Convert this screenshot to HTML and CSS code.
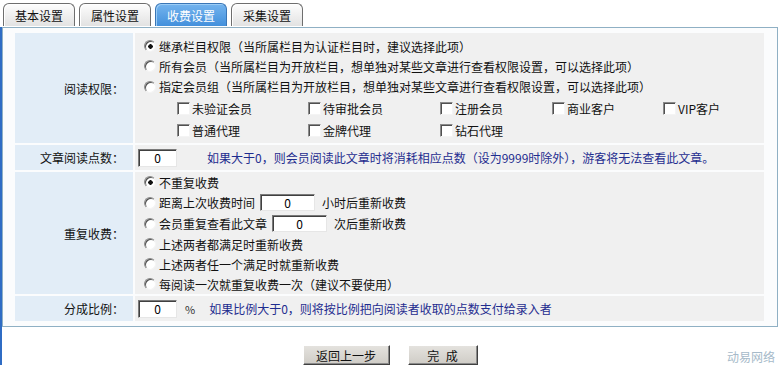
FILE: index.html
```html
<!DOCTYPE html>
<html lang="zh-CN">
<head>
  <meta charset="UTF-8" />
  <title>收费设置</title>
  <link rel="stylesheet" href="styles.css">
</head>
<body>
  <div class="tabs">
    <div class="tab">基本设置</div>
    <div class="tab">属性设置</div>
    <div class="tab active">收费设置</div>
    <div class="tab">采集设置</div>
  </div>

  <div class="main">
    <div class="panel">
      <div class="form">
        <div class="label">阅读权限：</div>
        <div class="field field-perm">
          <label class="line"><input type="radio" name="perm" checked>继承栏目权限（当所属栏目为认证栏目时，建议选择此项）</label>
          <label class="line"><input type="radio" name="perm">所有会员（当所属栏目为开放栏目，想单独对某些文章进行查看权限设置，可以选择此项）</label>
          <label class="line line-tall"><input type="radio" name="perm">指定会员组（当所属栏目为开放栏目，想单独对某些文章进行查看权限设置，可以选择此项）</label>
          <div class="groups">
            <label><input type="checkbox">未验证会员</label>
            <label><input type="checkbox">待审批会员</label>
            <label><input type="checkbox">注册会员</label>
            <label><input type="checkbox">商业客户</label>
            <label><input type="checkbox">VIP客户</label>
            <label><input type="checkbox">普通代理</label>
            <label><input type="checkbox">金牌代理</label>
            <label><input type="checkbox">钻石代理</label>
          </div>
        </div>

        <div class="label">文章阅读点数：</div>
        <div class="field field-inline">
          <input type="text" class="num" value="0">
          <span class="hint">如果大于0，则会员阅读此文章时将消耗相应点数（设为9999时除外），游客将无法查看此文章。</span>
        </div>

        <div class="label">重复收费：</div>
        <div class="field field-repeat">
          <label class="line"><input type="radio" name="repeat" checked>不重复收费</label>
          <label class="line line-tall"><input type="radio" name="repeat">距离上次收费时间<input type="text" class="num num-wide" value="0">小时后重新收费</label>
          <label class="line line-tall"><input type="radio" name="repeat">会员重复查看此文章<input type="text" class="num num-wide" value="0">次后重新收费</label>
          <label class="line"><input type="radio" name="repeat">上述两者都满足时重新收费</label>
          <label class="line"><input type="radio" name="repeat">上述两者任一个满足时就重新收费</label>
          <label class="line"><input type="radio" name="repeat">每阅读一次就重复收费一次（建议不要使用）</label>
        </div>

        <div class="label">分成比例：</div>
        <div class="field field-inline">
          <input type="text" class="num" value="0">
          <span class="unit">%</span>
          <span class="hint">如果比例大于0，则将按比例把向阅读者收取的点数支付给录入者</span>
        </div>
      </div>
    </div>

    <div class="actions">
      <button class="btn btn-back">返回上一步</button>
      <button class="btn btn-done">完 成</button>
    </div>
  </div>

  <div class="watermark">动易网络</div>
</body>
</html>
```

FILE: styles.css
```css
body {
  margin: 0;
  font-family: "Noto Sans CJK SC", "Noto Sans", sans-serif;
  font-size: 12px;
  color: #111;
  background: #fff;
  position: relative;
  height: 365px;
  overflow: hidden;
}

/* tabs */
.tabs {
  display: flex;
  gap: 4px;
  padding: 3px 0 0 3px;
}
.tab {
  width: 72px;
  height: 23px;
  line-height: 23px;
  box-sizing: border-box;
  text-align: center;
  border: 1px solid #6e6e6e;
  border-bottom: none;
  border-radius: 6px 6px 0 0;
  background: linear-gradient(to bottom, #fdfdfd, #e2e2e2);
  box-shadow: inset 1px 1px 0 #fff;
  color: #111;
}
.tab.active {
  border-color: #3a76b6;
  background: linear-gradient(to bottom, #74b4ee, #4390dc);
  box-shadow: inset 1px 1px 0 #9ccdf6;
  color: #fff;
}
.tabs + .main { margin-top: 1px; }

/* main area */
.main {
  border-left: 2px solid #2f6cc4;
  height: 338px;
  box-sizing: border-box;
}
.panel {
  width: 776px;
  box-sizing: border-box;
  border: 1px solid #8fb0c4;
  background: #fbfcfd;
  padding: 5px 13px 5px 12px;
}
.form {
  display: grid;
  grid-template-columns: 118px 1fr;
  gap: 2px;
}
.label {
  background: #e2edf7;
  display: flex;
  align-items: center;
  justify-content: flex-end;
  padding-right: 9px;
}
.field {
  background: #f0f0f0;
}

.field-perm { padding: 3px 0 2px 9px; }
.field-repeat { padding: 0 0 0 9px; }
.field-inline {
  display: flex;
  align-items: center;
  height: 25px;
  padding-left: 3px;
}

.line {
  display: flex;
  align-items: center;
  height: 20px;
  white-space: nowrap;
}
.line-tall { height: 21px; }

.groups {
  display: grid;
  grid-template-columns: 131px 132px 112px 111px auto;
  grid-auto-rows: 22px;
  margin-left: 33px;
}
.groups label {
  display: flex;
  align-items: center;
}

/* form controls, classic sunken look */
input[type=radio],
input[type=checkbox] {
  appearance: none;
  -webkit-appearance: none;
  margin: 0 3px 0 0;
  background: #fff;
  border: 1px solid;
  border-color: #8a8a8a #f4f4f4 #f4f4f4 #8a8a8a;
  box-shadow: inset 1px 1px 0 #505050;
  flex: none;
}
input[type=radio] {
  width: 12px;
  height: 12px;
  border-radius: 50%;
}
input[type=radio]:checked {
  background: radial-gradient(circle at 55% 55%, #111 0 2px, #fff 2.5px);
}
input[type=checkbox] {
  width: 13px;
  height: 13px;
  margin-right: 2px;
}

.num {
  width: 39px;
  height: 18px;
  box-sizing: border-box;
  padding: 0;
  margin: 0;
  font: inherit;
  text-align: center;
  background: #fff;
  border: 1px solid;
  border-color: #7a7a7a #e6e6e6 #e6e6e6 #7a7a7a;
  box-shadow: inset 1px 1px 0 #404040;
}
.num-wide {
  width: 55px;
  height: 17px;
  margin: 0 7px 0 5px;
}
.field-inline .num { margin-right: 30px; }
.field-inline .num + .unit { margin-left: -22px; }
.unit {
  font-size: 11px;
  color: #333;
  margin-right: 14px;
}
.hint {
  color: #1f2d8f;
  white-space: nowrap;
}

/* buttons */
.actions {
  display: flex;
  justify-content: center;
  gap: 18px;
  margin-top: 18px;
  padding-right: 2px;
}
.btn {
  height: 20px;
  padding: 0;
  font: inherit;
  color: #111;
  background: linear-gradient(to bottom, #e4e2de, #cfccc6);
  border: 1px solid;
  border-color: #fff #404040 #404040 #fff;
  box-shadow: inset -1px -1px 0 #8a8a8a;
}
.btn-back { width: 87px; }
.btn-done { width: 70px; word-spacing: 4px; }

.watermark {
  position: absolute;
  right: 5px;
  top: 350px;
  line-height: 14px;
  color: #a6bac9;
}
```
